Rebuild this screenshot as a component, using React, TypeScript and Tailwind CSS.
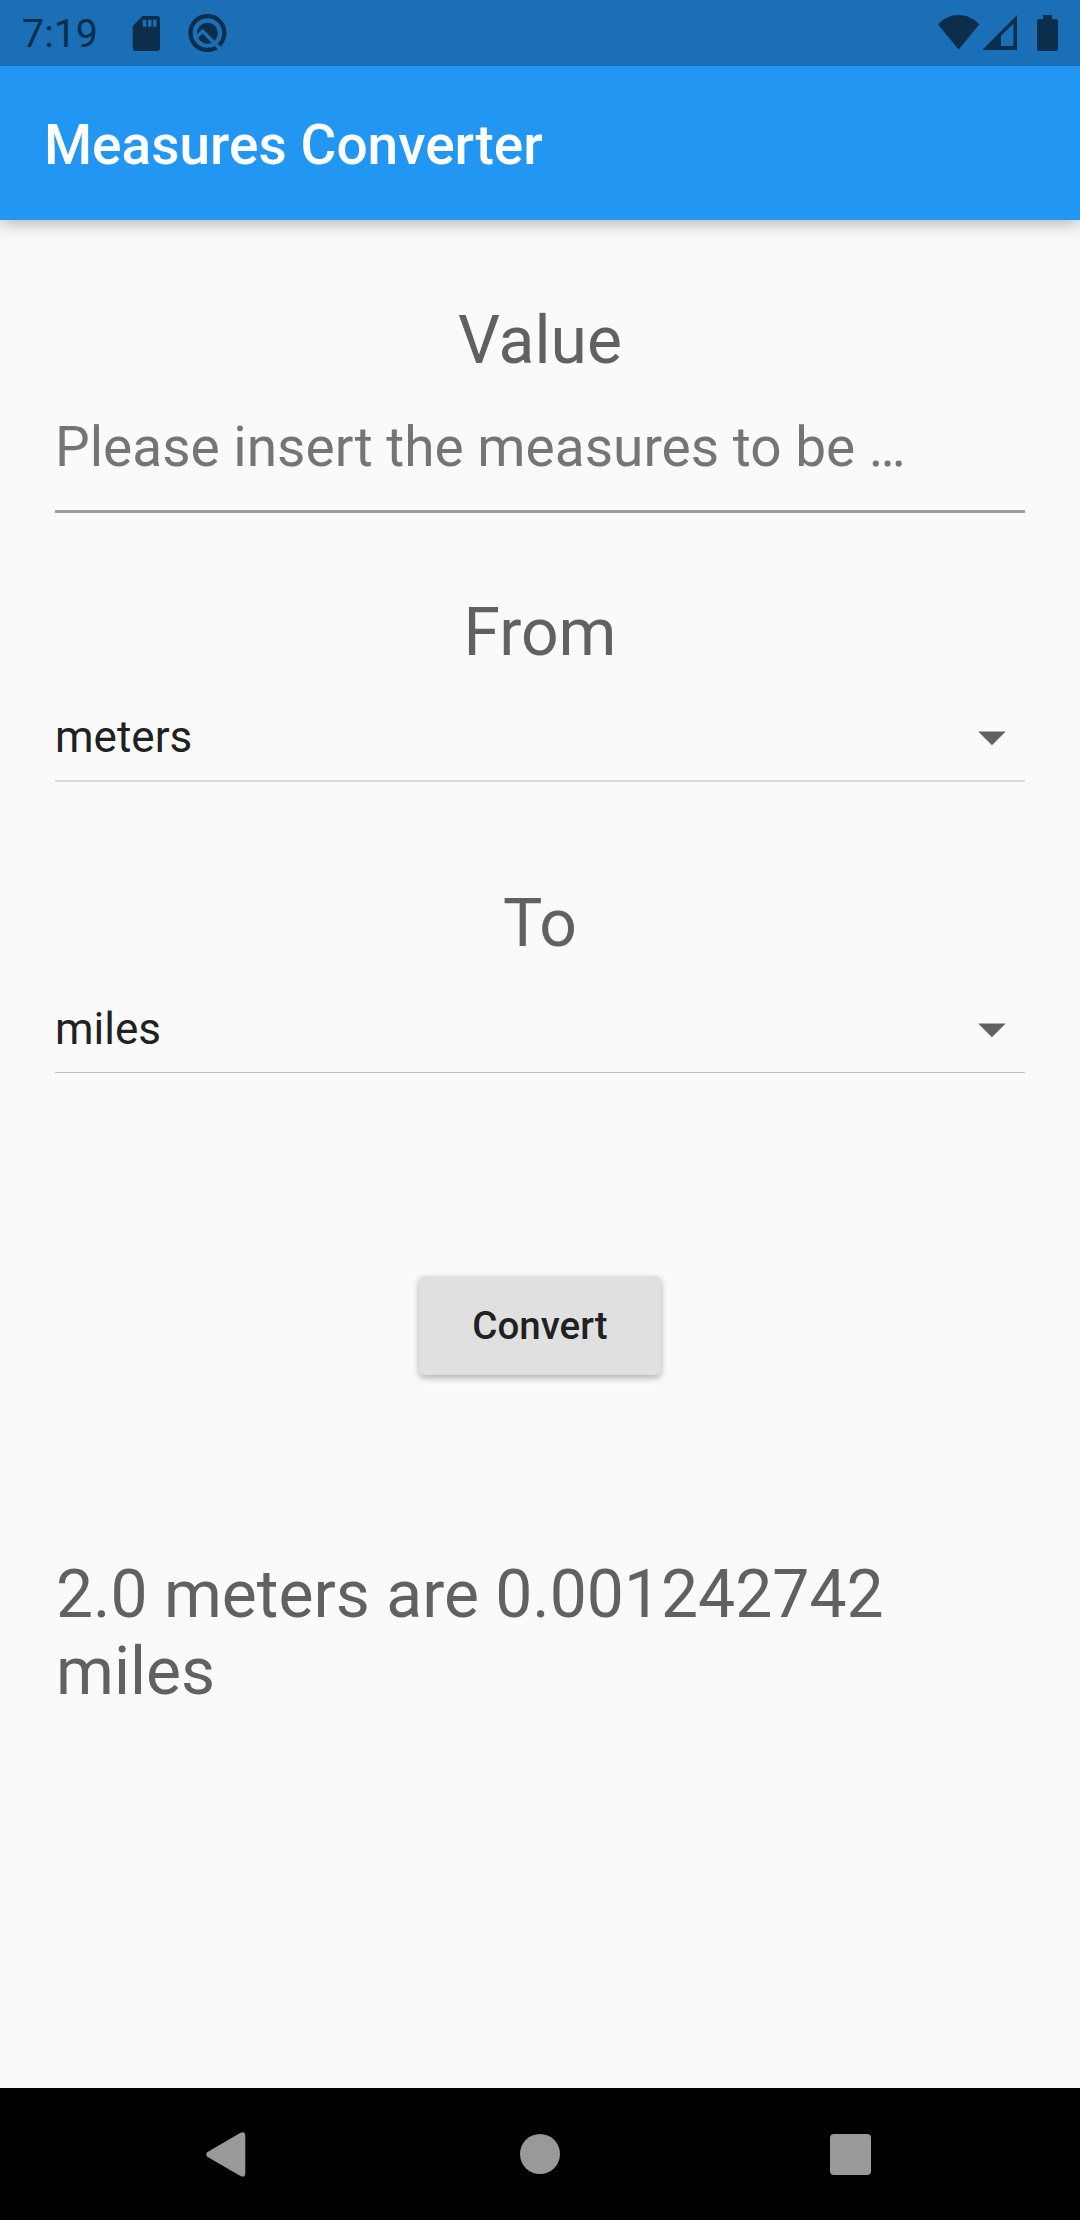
function StatusBar() {
  return (
    <header className="relative z-10 flex h-[66px] shrink-0 items-start bg-[#1a6fb7] text-[#0a2e4b]">
      <span className="ml-[22px] mt-[11px] w-[110px] text-[39.4px] leading-[46px]">7:19</span>
      {/* SD card */}
      <svg className="mt-[16px] h-[35px] w-[28px]" viewBox="0 0 28 35" fill="currentColor">
        <path
          fillRule="evenodd"
          d="M10.5 0H25a3 3 0 0 1 3 3v29a3 3 0 0 1-3 3H3.7a3 3 0 0 1-3-3V10zM10.7 3.8v7h3.6v-7zM16 3.8v7h3.6v-7zM21 3.8v7h3.6v-7z"
        />
      </svg>
      {/* Android Q mark */}
      <svg className="ml-[28px] mt-[14px] h-[39px] w-[39px]" viewBox="0 0 39 39">
        <circle cx="19.4" cy="19" r="16.9" fill="none" stroke="currentColor" strokeWidth="4.3" />
        <circle cx="19.4" cy="19.2" r="10.5" fill="currentColor" />
        <path d="M7.2 24.2 14.6 17.2 33.6 36.2" fill="none" stroke="#1a6fb7" strokeWidth="3.6" />
      </svg>
      <div className="ml-auto mr-[22px] mt-[15px] flex items-start">
        {/* Wi-Fi */}
        <svg className="h-[36px] w-[42px]" viewBox="0 0 42 36" fill="currentColor">
          <path d="M0 9.5C5.5 3.2 13 0 20.6 0S35.7 3.2 41.2 9.5L20.6 34.5z" />
        </svg>
        {/* Mobile signal */}
        <svg className="ml-[2px] h-[36px] w-[36px]" viewBox="0 0 36 36" fill="currentColor">
          <path fillRule="evenodd" d="M.3 35H35V0zM19 20.7V31H31.4V8.7z" />
        </svg>
        {/* Battery */}
        <svg className="ml-[19px] h-[36px] w-[21px]" viewBox="0 0 21 36" fill="currentColor">
          <path d="M6 0h9v4h3.8A2.2 2.2 0 0 1 21 6.2v27.6A2.2 2.2 0 0 1 18.8 36H2.2A2.2 2.2 0 0 1 0 33.8V6.2A2.2 2.2 0 0 1 2.2 4H6z" />
        </svg>
      </div>
    </header>
  );
}

function Heading({ children }: { children: string }) {
  return <h2 className="text-[66px] leading-[77px]">{children}</h2>;
}

function Arrow() {
  return (
    <svg className="mr-[19px] mt-[20px] h-[15px] w-[28px]" viewBox="0 0 28 15" fill="#616161">
      <path d="M.2.4H27.7L13.95 14.2z" />
    </svg>
  );
}

export default function App() {
  return (
    <div className="flex h-[2220px] w-[1080px] flex-col bg-[#fafafa] font-['Roboto',sans-serif]">
      <StatusBar />
      <div className="flex h-[154px] shrink-0 items-center bg-[#2196f3] px-[44px] pt-[4px] shadow-[0_4px_16px_rgba(0,0,0,0.28)]">
        <h1 className="text-[55px] font-medium leading-[64px] text-white">Measures Converter</h1>
      </div>

      <main className="flex flex-1 flex-col items-center px-[55px] pt-[82px] text-[#616161]">
        <Heading>Value</Heading>
        <div className="mb-[81px] mt-[36px] h-[98px] w-full border-b-3 border-[#9e9e9e] text-[55px] leading-[64px] text-[#757575]">
          Please insert the measures to be …
        </div>

        <Heading>From</Heading>
        <div className="mb-[103px] flex h-[111px] w-full items-start justify-between border-b-2 border-[#dbdbdb] pt-[40px]">
          <span className="text-[44px] leading-[52px] text-[#212121]">meters</span>
          <Arrow />
        </div>

        <Heading>To</Heading>
        <div className="flex h-[111px] w-full items-start justify-between border-b border-[#bdbdbd] pt-[41px]">
          <span className="text-[44px] leading-[52px] text-[#212121]">miles</span>
          <Arrow />
        </div>

        <button className="mt-[203px] h-[99px] w-[242px] rounded-[5.5px] bg-[#e0e0e0] text-[38.5px] font-medium leading-[45px] text-[#212121] shadow-[0_3px_7px_rgba(0,0,0,0.3)]">
          Convert
        </button>

        <p className="mt-[181px] w-full pl-px text-[66px] leading-[77px]">2.0 meters are 0.001242742 miles</p>
      </main>

      <nav className="flex h-[132px] shrink-0 items-start bg-black pl-[206px] text-[#999999]">
        <svg className="mt-[44px] h-[45px] w-[40px]" viewBox="0 0 40 45" fill="currentColor">
          <path d="M1.2 20.3 34.5.8Q39.3-1.2 39.3 4V41Q39.3 46.2 34.5 43.9L1.2 24.7Q-.6 22.5 1.2 20.3z" />
        </svg>
        <div className="ml-[274px] mt-[46px] size-[40px] rounded-full bg-[#999999]" />
        <div className="ml-[270px] mt-[46px] size-[41px] rounded-[4px] bg-[#999999]" />
      </nav>
    </div>
  );
}
